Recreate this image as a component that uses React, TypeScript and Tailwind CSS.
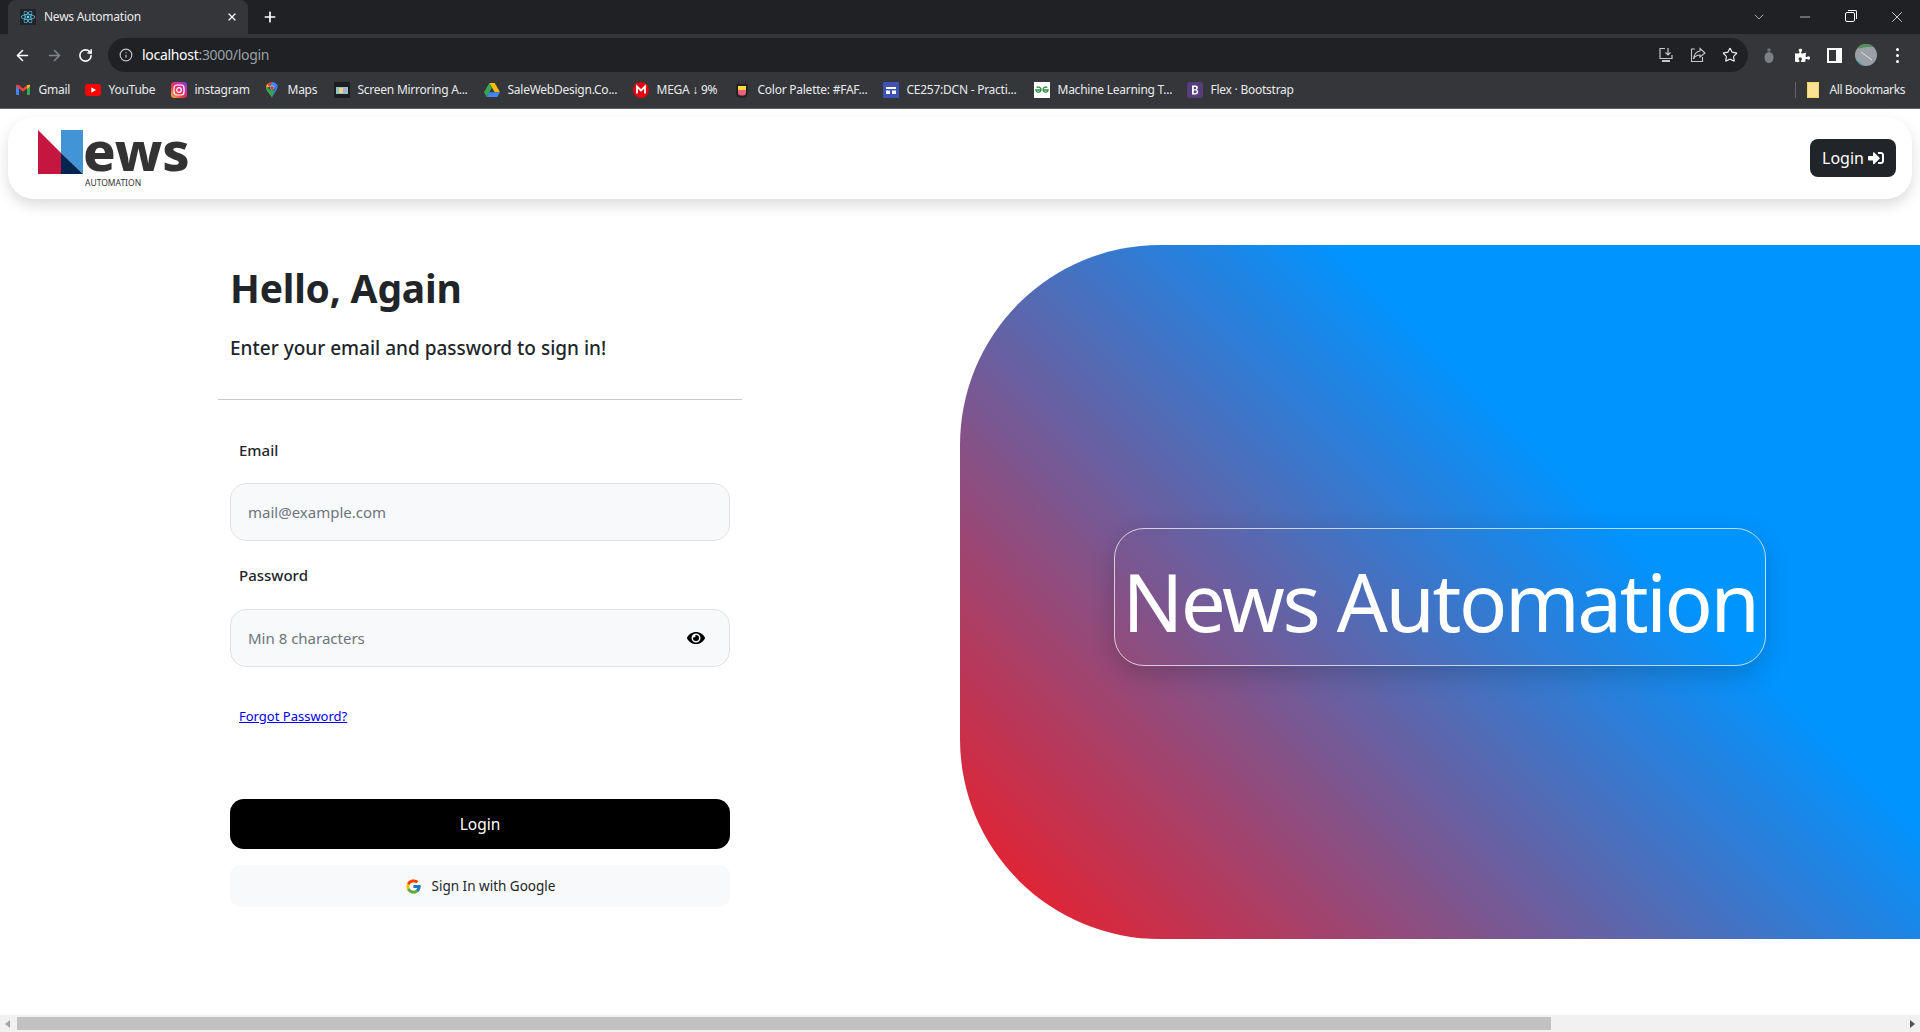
import { ArrowLeft, ArrowRight, ChevronDown, Info, Minus, Plus, RotateCw, Star, X } from "lucide-react";
import { FaEye, FaPuzzlePiece, FaReact, FaSignInAlt } from "react-icons/fa";
import { FcGoogle } from "react-icons/fc";
import type { ReactNode } from "react";

function GmailIcon() {
  return (
    <svg width="14" height="11" viewBox="0 0 14 11">
      <path d="M0 2v8a1 1 0 0 0 1 1h2V4z" fill="#4285f4" />
      <path d="M14 2v8a1 1 0 0 1-1 1h-2V4z" fill="#34a853" />
      <path d="M11 1l3-.2V2.500L11 5z" fill="#fbbc04" />
      <path d="M0 .8 3 1 7 4.500 11 1v3.500L7 7.700 3 4.500 0 2.500z" fill="#ea4335" />
    </svg>
  );
}

function YoutubeIcon() {
  return (
    <svg width="16" height="12" viewBox="0 0 16 12">
      <rect width="16" height="12" rx="3" fill="#f00" />
      <path d="M6.300 3.300 11 6l-4.700 2.700z" fill="#fff" />
    </svg>
  );
}

function InstagramIcon() {
  return (
    <svg width="16" height="16" viewBox="0 0 16 16">
      <defs>
        <linearGradient id="ig" x1="0" y1="1" x2="1" y2="0">
          <stop offset="0" stopColor="#fdc13a" />
          <stop offset="0.4" stopColor="#f0304f" />
          <stop offset="0.75" stopColor="#c72fb5" />
          <stop offset="1" stopColor="#5b4fe0" />
        </linearGradient>
      </defs>
      <rect width="16" height="16" rx="3.500" fill="url(#ig)" />
      <rect x="3" y="3" width="10" height="10" rx="3" fill="none" stroke="#fff" strokeWidth="1.200" />
      <circle cx="8" cy="8" r="2.300" fill="none" stroke="#fff" strokeWidth="1.200" />
    </svg>
  );
}

function MapsIcon() {
  return (
    <svg width="12" height="16" viewBox="0 0 12 16">
      <path d="M6 16C5 12.500 0 9.500 0 5.700L3 6.500C4 9 8 9 9 7z" fill="#34a853" />
      <path d="M6 16 9 7l2.500-3.500C12.500 7 8 11 6 16z" fill="#4285f4" />
      <path d="M1.500 1.800A6 6 0 0 0 0 5.700L3.500 5z" fill="#fbbc04" />
      <path d="M1.500 1.800A6 6 0 0 1 6 0L3.500 5z" fill="#ea4335" />
      <path d="M6 0a6 6 0 0 1 5.500 3.500L8.500 7 3.500 5z" fill="#4285f4" />
      <circle cx="6" cy="5.700" r="2.100" fill="#fff" opacity="0.9" />
      <circle cx="6" cy="5.700" r="1.800" fill="#a94442" />
    </svg>
  );
}

function MirrorIcon() {
  return (
    <svg width="16" height="16" viewBox="0 0 16 16">
      <rect width="16" height="16" fill="#1d1d1f" />
      <rect x="2" y="5" width="12" height="7" fill="#8fc3c9" />
      <rect x="5" y="6" width="4" height="5" fill="#e8d77a" />
      <rect x="9" y="6" width="3" height="5" fill="#b9a4d8" />
    </svg>
  );
}

function DriveIcon() {
  return (
    <svg width="16" height="14" viewBox="0 0 16 14">
      <path d="M5.300 0h5.400L16 9.300h-5.300z" fill="#fbbc04" />
      <path d="M5.300 0 0 9.300 2.700 14l5.200-9.300z" fill="#34a853" />
      <path d="M2.700 14h10.600L16 9.300H5.300z" fill="#4285f4" />
    </svg>
  );
}

function MegaIcon() {
  return (
    <svg width="16" height="16" viewBox="0 0 16 16">
      <circle cx="8" cy="8" r="8" fill="#e3000f" />
      <path d="M4 11.500V4.500l4 4 4-4v7" fill="none" stroke="#fff" strokeWidth="1.800" />
    </svg>
  );
}

function PaletteIcon() {
  return (
    <svg width="12" height="16" viewBox="0 0 12 16">
      <path d="M2 0h1v3H2zM9 0h1v3H9z" fill="#222" />
      <path d="M0 2h12v9a5 5 0 0 1-5 5H5a5 5 0 0 1-5-5z" fill="#222" />
      <rect x="2" y="4" width="8" height="4" fill="#ffd83d" />
      <path d="M2 8h8v2.500A3 3 0 0 1 7 13.500H5a3 3 0 0 1-3-3z" fill="#f0607a" />
    </svg>
  );
}

function ClassroomIcon() {
  return (
    <svg width="16" height="16" viewBox="0 0 16 16">
      <rect width="16" height="16" fill="#3f51b5" />
      <path d="M3 5h10v2H3zM3 8.500h4V12H3zM9 8.500h4V12H9z" fill="#fff" />
    </svg>
  );
}

function GfgIcon() {
  return (
    <svg width="16" height="16" viewBox="0 0 16 16">
      <rect width="16" height="16" fill="#fff" />
      <path d="M7.500 8H1.800a2.600 2.600 0 1 0 .9-2.400M8.500 8h5.700a2.600 2.600 0 1 1-.9-2.400" fill="none" stroke="#2f8d46" strokeWidth="1.300" />
    </svg>
  );
}

function BootstrapIcon() {
  return (
    <svg width="16" height="16" viewBox="0 0 16 16">
      <rect width="16" height="16" rx="2.500" fill="#563d7c" />
      <path d="M5 3.500h3.600c3 0 3 3.500.9 4.200 2.600.5 2.400 4.800-1 4.800H5zM6.800 5v2.200h1.500c1.300 0 1.300-2.200 0-2.200zM6.800 8.500V11h1.900c1.500 0 1.500-2.500 0-2.500z" fill="#fff" fillRule="evenodd" />
    </svg>
  );
}

function FolderIcon() {
  return (
    <svg width="12" height="16" viewBox="0 0 12 16">
      <path d="M0 0h12v16H0z" fill="#fdd663" />
      <path d="M1 1h10v14H1z" fill="#fde293" />
    </svg>
  );
}

const bookmarks: { label: string; icon: ReactNode; slot: string }[] = [
  { label: "Gmail", icon: <GmailIcon />, slot: "w-[70px]" },
  { label: "YouTube", icon: <YoutubeIcon />, slot: "w-[86px]" },
  { label: "instagram", icon: <InstagramIcon />, slot: "w-[93px]" },
  { label: "Maps", icon: <MapsIcon />, slot: "w-[70px]" },
  { label: "Screen Mirroring A...", icon: <MirrorIcon />, slot: "w-[150px]" },
  { label: "SaleWebDesign.Co...", icon: <DriveIcon />, slot: "w-[149px]" },
  { label: "MEGA ↓ 9%", icon: <MegaIcon />, slot: "w-[101px]" },
  { label: "Color Palette: #FAF...", icon: <PaletteIcon />, slot: "w-[149px]" },
  { label: "CE257:DCN - Practi...", icon: <ClassroomIcon />, slot: "w-[151px]" },
  { label: "Machine Learning T...", icon: <GfgIcon />, slot: "w-[153px]" },
  { label: "Flex · Bootstrap", icon: <BootstrapIcon />, slot: "w-[110px]" },
];

function BrowserChrome() {
  return (
    <div className="shrink-0 bg-[#35363a] text-[12px] tracking-[-0.25px] text-[#e8eaed]">
      {/* вкладки */}
      <div className="flex h-[34px] items-center bg-[#202124] pl-[8px]">
        <div className="flex h-[34px] w-[240px] items-center rounded-t-[8px] bg-[#35363a] pl-[12px] pr-[10px]">
          <span className="flex h-[16px] w-[16px] items-center justify-center bg-[#20232a]">
            <FaReact className="h-[14px] w-[14px] text-[#61dafb]" />
          </span>
          <span className="ml-[8px] flex-1">News Automation</span>
          <X className="h-[12px] w-[12px] text-white" strokeWidth={2.5} />
        </div>
        <Plus className="ml-[14px] h-[16px] w-[16px] text-white" strokeWidth={2.5} />
        <div className="flex-1" />
        <ChevronDown className="mr-[30px] h-[16px] w-[16px] text-[#c4c7c5]" strokeWidth={1.25} />
        <Minus className="mr-[32px] h-[16px] w-[16px] text-white" strokeWidth={1} />
        <div className="relative mr-[33px] h-[10px] w-[10px] rounded-[2px] border border-white">
          <div className="absolute -right-[3px] -top-[3px] h-[9px] w-[9px] rounded-tr-[2px] border-r border-t border-white" />
        </div>
        <X className="mr-[14px] h-[18px] w-[18px] text-white" strokeWidth={1} />
      </div>
      {/* адресная строка */}
      <div className="flex h-[38px] items-end">
        <div className="flex h-[34px] w-[108px] items-center pl-[14px]">
          <ArrowLeft className="h-[17px] w-[17px] text-white" strokeWidth={2.25} />
          <ArrowRight className="ml-[15px] h-[17px] w-[17px] text-[#80868b]" strokeWidth={2.25} />
          <RotateCw className="ml-[15px] h-[15px] w-[15px] text-white" strokeWidth={2.5} />
        </div>
        <div className="flex h-[34px] w-[1640px] items-center rounded-full bg-[#202124] pb-[1px] pl-[11px] pr-[10px] text-[14px] tracking-[-0.3px]">
          <Info className="h-[14px] w-[14px] text-[#c4c7c5]" />
          <span className="ml-[9px] text-white">localhost</span>
          <span className="text-[#9aa0a6]">:3000/login</span>
          <div className="flex-1" />
          <svg width="16" height="16" viewBox="0 0 16 16" fill="none" stroke="#c4c7c5" strokeWidth="1.200">
            <path d="M7 1.500H2v10h12V8M10 1v7M7.500 5.500 10 8l2.500-2.500" />
            <path d="M4 14h8" strokeWidth="2" />
          </svg>
          <svg className="ml-[16px]" width="16" height="16" viewBox="0 0 16 16" fill="none" stroke="#c4c7c5" strokeWidth="1.100">
            <path d="M5 2H1.500v12.500h11V10" />
            <path d="M10 1.500 15 6l-5 4V8C7 8 5 9 3.500 12 4 8 6 4.500 10 4z" />
          </svg>
          <Star className="ml-[16px] h-[16px] w-[16px] text-[#e8eaed]" strokeWidth={1.75} />
        </div>
        <div className="flex h-[34px] flex-1 items-center pl-[16px]">
          <svg width="10" height="15" viewBox="0 0 10 15">
            <circle cx="5" cy="2" r="1.800" fill="#6f7377" />
            <ellipse cx="5" cy="9.500" rx="4.500" ry="5.500" fill="#7c8085" />
          </svg>
          <FaPuzzlePiece className="ml-[21px] h-[15px] w-[15px] text-white" />
          <svg className="ml-[17px]" width="15" height="15" viewBox="0 0 15 15">
            <path d="M0 0h15v15H0zM2 2v11h7V2z" fill="#fff" fillRule="evenodd" />
          </svg>
          <svg className="ml-[13px]" width="22" height="22" viewBox="0 0 22 22">
            <defs>
              <clipPath id="avatar">
                <circle cx="11" cy="11" r="11" />
              </clipPath>
            </defs>
            <g clipPath="url(#avatar)">
              <rect width="22" height="22" fill="#9aa0a6" />
              <path d="M0 5 8 0h14v3H12z" fill="#4f8f5b" />
              <path d="M16 0h6v4z" fill="#d98c2b" />
              <path d="M0 15l9 7H0z" fill="#17a2b8" />
              <path d="M6 8l11 8" stroke="#dfe1e5" strokeWidth="1" />
            </g>
          </svg>
          <div className="ml-[19px] flex flex-col gap-[3px]">
            <span className="h-[3px] w-[3px] rounded-full bg-white" />
            <span className="h-[3px] w-[3px] rounded-full bg-white" />
            <span className="h-[3px] w-[3px] rounded-full bg-white" />
          </div>
        </div>
      </div>
      {/* закладки */}
      <div className="flex h-[37px] items-center border-b border-[#5f6368] pb-[1px] pl-[15px]">
        {bookmarks.map((b) => (
          <div key={b.label} className={`flex items-center ${b.slot}`}>
            <span className="flex h-[16px] w-[16px] items-center justify-center">{b.icon}</span>
            <span className="ml-[7.500px] whitespace-nowrap">{b.label}</span>
          </div>
        ))}
        <div className="flex-1" />
        <div className="h-[16px] w-px bg-[#5f6368]" />
        <span className="ml-[11px]">
          <FolderIcon />
        </span>
        <span className="ml-[10px] mr-[15px] whitespace-nowrap tracking-[-0.4px]">All Bookmarks</span>
      </div>
    </div>
  );
}

function Logo() {
  return (
    <div className="flex items-start">
      <svg className="mt-[13px]" width="45" height="44" viewBox="0 0 45 44">
        <path d="M0 0 23 23V44H0z" fill="#c5163f" />
        <path d="M23 0H45V44L23 23z" fill="#4194d6" />
        <path d="M23 23 45 44H23z" fill="#04254f" />
      </svg>
      <div className="flex flex-col text-[#333]">
        <span className="mt-[6px] text-[54px] font-extrabold leading-[54px]">ews</span>
        <span className="ml-[2px] mt-[1px] text-[8.500px] leading-[10px]">AUTOMATION</span>
      </div>
    </div>
  );
}

function Navbar() {
  return (
    <div className="mx-[8px] mt-[8px] flex h-[82px] shrink-0 items-start justify-between rounded-[26px] bg-white pl-[30px] pr-[16px] shadow-[0_6px_14px_rgba(0,0,0,0.14)]">
      <Logo />
      <button
        type="button"
        className="mt-[22px] flex h-[38px] w-[86px] items-center justify-center gap-[4px] rounded-[8px] bg-[#212529] text-[16px] text-white"
      >
        Login <FaSignInAlt className="h-[16px] w-[16px]" />
      </button>
    </div>
  );
}

function LoginForm() {
  return (
    <div className="ml-[218px] w-[524px] pt-[19px] text-[#212529]">
      <h1 className="pl-[12px] text-[39px] font-bold leading-[48px] tracking-[-0.2px]">Hello, Again</h1>
      <h5 className="mt-[24px] pl-[12px] text-[19px] font-medium leading-[24px]">
        Enter your email and password to sign in!
      </h5>
      <hr className="mt-[39px] border-t border-[#c8c8c8]" />

      <div className="px-[12px]">
        <label className="mt-[38px] block pl-[9px] text-[15px] font-medium leading-[24px]">Email</label>
        <div className="mt-[21px] flex h-[58px] items-center rounded-[16px] border border-[#dee2e6] bg-[#f8f9fa] px-[17px] text-[15px] text-[#6c757d]">
          mail@example.com
        </div>

        <label className="mt-[22px] block pl-[9px] text-[15px] font-medium leading-[24px]">Password</label>
        <div className="mt-[22px] flex h-[58px] items-center justify-between rounded-[16px] border border-[#dee2e6] bg-[#f8f9fa] pl-[17px] pr-[24px] text-[15px] text-[#6c757d]">
          Min 8 characters
          <FaEye className="h-[18px] w-[18px] text-black" />
        </div>

        <div className="mt-[39px] pl-[9px] text-[13px] leading-[20px]">
          <a href="#forgot" className="text-[#0000ee] underline">
            Forgot Password?
          </a>
        </div>

        <button
          type="button"
          className="mt-[73px] h-[50px] w-full rounded-[14px] bg-black pt-[1px] text-[15.500px] text-white"
        >
          Login
        </button>
        <button
          type="button"
          className="mt-[16px] flex h-[42px] w-full items-center justify-center gap-[10px] rounded-[10px] bg-[#f8f9fa] pt-[1px] text-[13.500px] text-[#212529]"
        >
          <FcGoogle className="h-[17px] w-[17px]" />
          Sign In with Google
        </button>
      </div>
    </div>
  );
}

function HeroPanel() {
  return (
    <div className="ml-auto flex h-[694px] w-[960px] items-center justify-center rounded-l-[200px] bg-[linear-gradient(45deg,#ea1f2c_4%,#0094ff_65%)]">
      <div className="mt-[10px] flex h-[138px] w-[652px] items-center justify-center rounded-[30px] border border-white/70 pt-[7px] text-[80px] font-normal text-white shadow-[0_8px_24px_rgba(0,0,0,0.18)]">
        <span className="tracking-[-2.4px]">News Automation</span>
      </div>
    </div>
  );
}

function Scrollbar() {
  return (
    <div className="flex h-[17px] shrink-0 items-center bg-[#f1f1f1]">
      <div className="ml-[5px] h-0 w-0 border-y-[4px] border-r-[5px] border-y-transparent border-r-[#a3a3a3]" />
      <div className="ml-[7px] h-[13px] w-[1534px] bg-[#c1c1c1]" />
      <div className="flex-1" />
      <div className="mr-[5px] h-0 w-0 border-y-[4px] border-l-[5px] border-y-transparent border-l-[#505050]" />
    </div>
  );
}

export default function App() {
  return (
    <div className="flex h-screen w-full flex-col overflow-hidden bg-white font-['Noto_Sans',sans-serif]">
      <BrowserChrome />
      <Navbar />
      <main className="mt-[46px] flex flex-1 items-start">
        <LoginForm />
        <HeroPanel />
      </main>
      <Scrollbar />
    </div>
  );
}
